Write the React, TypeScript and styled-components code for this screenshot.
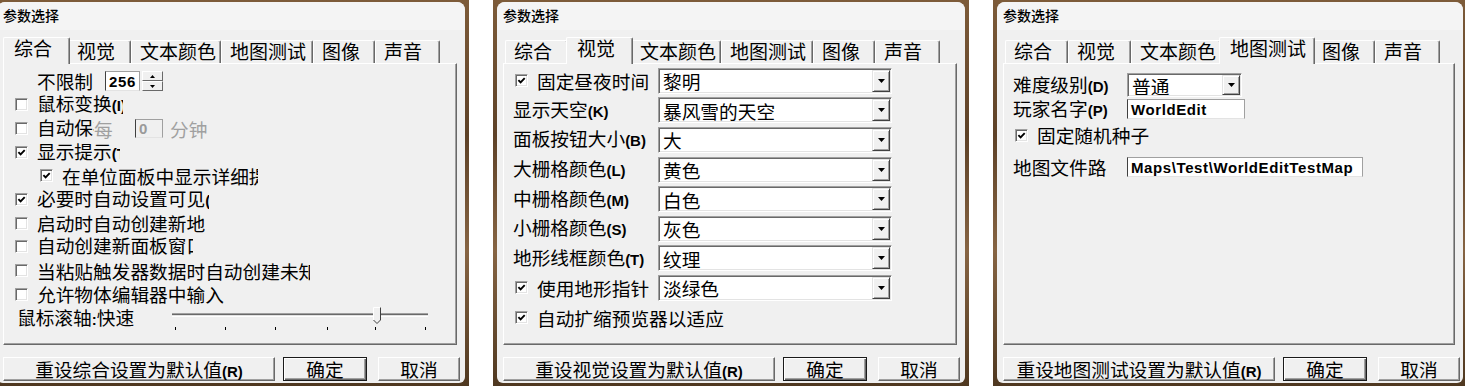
import React from "react";
import styled, { createGlobalStyle, css } from "styled-components";

const CJK = `"Noto Sans CJK SC", "Noto Sans", sans-serif`;
const LATIN = `"Liberation Sans", Arial, sans-serif`;

const GlobalStyle = createGlobalStyle`
  html, body {
    margin: 0;
    padding: 0;
    background: #ffffff;
  }
  body {
    font-family: ${CJK};
    color: #000000;
  }
`;

const TABS = [
  { label: "综合", w: 63 },
  { label: "视觉", w: 63 },
  { label: "文本颜色", w: 90 },
  { label: "地图测试", w: 92 },
  { label: "图像", w: 62 },
  { label: "声音", w: 65 },
];

const Screen = styled.div`
  display: flex;
  gap: 24px;
  width: 1465px;
  height: 386px;
  overflow: hidden;
`;

const Frame = styled.div<{ $left: number; $right: number }>`
  display: flex;
  flex: none;
  padding: 2px ${(p) => p.$right}px 3px ${(p) => p.$left}px;
  background: linear-gradient(180deg, #7d5b39 0%, #5d4127 35%, #866443 65%, #4f3820 100%);
  overflow: hidden;
`;

const Dialog = styled.div<{ $width: number; $shift: number }>`
  display: flex;
  flex-direction: column;
  flex: none;
  width: ${(p) => p.$width}px;
  height: 381px;
  margin-left: ${(p) => -p.$shift}px;
  background: #f0f0f0;
  border-radius: 8px 8px 6px 6px;
  overflow: hidden;
`;

const TitleBar = styled.div`
  height: 28px;
  box-sizing: border-box;
  padding: 5px 0 0 6px;
  font-size: 14px;
  line-height: 16px;
  font-weight: 500;
  background: #f4f4f4;
`;

const TabStrip = styled.div`
  display: flex;
  align-items: flex-end;
  height: 33px;
  padding-left: 8px;
  position: relative;
  z-index: 1;
`;

const Tab = styled.div<{ $w: number; $active?: boolean }>`
  box-sizing: border-box;
  flex: none;
  width: ${(p) => p.$w}px;
  height: 23px;
  padding-left: 8px;
  font-size: 19px;
  line-height: 19px;
  white-space: nowrap;
  border-top: 1px solid #ffffff;
  border-left: 1px solid #ffffff;
  border-right: 1px solid #696969;
  box-shadow: inset -1px 0 0 #a0a0a0;
  border-radius: 2px 2px 0 0;
  background: #f0f0f0;
  ${(p) =>
    p.$active &&
    css`
      position: relative;
      width: ${p.$w + 4}px;
      height: 27px;
      margin: 0 -2px -1px;
      padding-left: 10px;
    `}
`;

const Sheet = styled.div`
  box-sizing: border-box;
  height: 282px;
  margin: 0 8px 0 6px;
  border-style: solid;
  border-width: 1px;
  border-color: #ffffff #696969 #696969 #ffffff;
  box-shadow: inset -1px -1px 0 #a0a0a0;
  background: #f0f0f0;
`;

const ButtonRow = styled.div`
  display: flex;
  margin-top: 12px;
  padding-left: 6px;
`;

const PushButton = styled.div<{ $w: number; $ml?: number; $default?: boolean }>`
  box-sizing: border-box;
  flex: none;
  width: ${(p) => p.$w}px;
  height: 24px;
  margin-left: ${(p) => p.$ml ?? 0}px;
  font-size: 18.7px;
  line-height: 21px;
  text-align: center;
  white-space: nowrap;
  background: #f0f0f0;
  border: 1px solid;
  border-color: #ffffff #696969 #696969 #ffffff;
  box-shadow: inset -1px -1px 0 #a0a0a0;
  ${(p) =>
    p.$default &&
    css`
      border-color: #1a1a1a;
      box-shadow: inset 1px 1px 0 #ffffff, inset -1px -1px 0 #696969, inset -2px -2px 0 #a0a0a0;
    `}
`;

const List = styled.div<{ $top: number }>`
  display: flex;
  flex-direction: column;
  padding-top: ${(p) => p.$top}px;
`;

const Row = styled.div<{ $h: number; $pad: number }>`
  display: flex;
  align-items: center;
  height: ${(p) => p.$h}px;
  padding-left: ${(p) => p.$pad}px;
  font-size: 18.7px;
`;

const Text = styled.span<{ $w?: number; $ml?: number; $dim?: boolean }>`
  flex: none;
  display: inline-block;
  overflow: hidden;
  white-space: nowrap;
  line-height: 22px;
  margin-left: ${(p) => p.$ml ?? 0}px;
  color: ${(p) => (p.$dim ? "#a0a0a0" : "#000000")};
  ${(p) =>
    p.$w !== undefined &&
    css`
      width: ${p.$w}px;
    `}
`;

const Hot = styled.span`
  font-family: ${LATIN};
  font-weight: 700;
  font-size: 15px;
`;

const Box = styled.span`
  box-sizing: border-box;
  flex: none;
  display: inline-flex;
  align-items: center;
  justify-content: center;
  width: 13px;
  height: 13px;
  background: #ffffff;
  border: 1px solid;
  border-color: #a0a0a0 #ffffff #ffffff #a0a0a0;
  box-shadow: inset 1px 1px 0 #696969, inset -1px -1px 0 #e3e3e3;
`;

const Field = styled.span<{ $w: number; $h: number; $ml?: number; $dim?: boolean }>`
  box-sizing: border-box;
  flex: none;
  display: inline-flex;
  align-items: center;
  width: ${(p) => p.$w}px;
  height: ${(p) => p.$h}px;
  margin-left: ${(p) => p.$ml ?? 0}px;
  padding-left: 3px;
  overflow: hidden;
  white-space: nowrap;
  background: ${(p) => (p.$dim ? "#f0f0f0" : "#ffffff")};
  border: 1px solid;
  border-color: #a0a0a0 #a0a0a0 #e3e3e3 #404040;
  font-family: ${LATIN};
  font-weight: 700;
  font-size: 15px;
  letter-spacing: 0.6px;
  color: ${(p) => (p.$dim ? "#9a9a9a" : "#000000")};
`;

const Spin = styled.span`
  flex: none;
  display: inline-flex;
  flex-direction: column;
  width: 21px;
  height: 20px;
  margin-left: 2px;
`;

const SpinHalf = styled.span`
  box-sizing: border-box;
  flex: 1;
  display: flex;
  align-items: center;
  justify-content: center;
  background: #f0f0f0;
  border: 1px solid;
  border-color: #ffffff #696969 #696969 #ffffff;
`;

const SelectBox = styled.span<{ $w: number; $h: number }>`
  box-sizing: border-box;
  flex: none;
  display: inline-flex;
  align-items: stretch;
  width: ${(p) => p.$w}px;
  height: ${(p) => p.$h}px;
  padding: 1px;
  background: #ffffff;
  border: 1px solid;
  border-color: #a0a0a0 #ffffff #ffffff #a0a0a0;
  box-shadow: inset 1px 1px 0 #696969, inset -1px -1px 0 #e3e3e3;
`;

const SelectValue = styled.span`
  flex: 1;
  display: flex;
  align-items: center;
  padding-left: 3px;
  overflow: hidden;
  white-space: nowrap;
  font-size: 18.7px;
`;

const DropButton = styled.span`
  box-sizing: border-box;
  flex: none;
  width: 18px;
  display: flex;
  align-items: center;
  justify-content: center;
  background: #f0f0f0;
  border: 1px solid;
  border-color: #e3e3e3 #404040 #404040 #e3e3e3;
  box-shadow: inset 1px 1px 0 #ffffff, inset -1px -1px 0 #a0a0a0;
`;

const TrackSvg = styled.svg<{ $ml: number }>`
  flex: none;
  margin-left: ${(p) => p.$ml}px;
`;

function CheckBox({ checked }: { checked?: boolean }) {
  return (
    <Box>
      {checked && (
        <svg width="9" height="9" viewBox="0 0 9 9">
          <path d="M1.4 4.2 L3.6 6.4 L7.7 2.1" fill="none" stroke="#000" strokeWidth="1.9" />
        </svg>
      )}
    </Box>
  );
}

function Select({ w, h, value }: { w: number; h: number; value: string }) {
  return (
    <SelectBox $w={w} $h={h}>
      <SelectValue>{value}</SelectValue>
      <DropButton>
        <svg width="7" height="4" viewBox="0 0 7 4">
          <path d="M0 0h7L3.5 4z" fill="#000" />
        </svg>
      </DropButton>
    </SelectBox>
  );
}

function Trackbar() {
  const ticks = [5, 55, 105, 157, 205, 255];
  return (
    <TrackSvg $ml={33} width="262" height="24" viewBox="0 0 262 24">
      <rect x="2" y="7" width="256" height="1" fill="#a0a0a0" />
      <rect x="2" y="8" width="256" height="1" fill="#696969" />
      <rect x="2" y="9" width="256" height="1" fill="#e3e3e3" />
      <rect x="2" y="10" width="256" height="1" fill="#ffffff" />
      {ticks.map((t) => (
        <rect key={t} x={t} y="21" width="1" height="3" fill="#000" />
      ))}
      <polygon points="203,1 211,1 211,14 207,18 203,14" fill="#f0f0f0" />
      <polyline points="203.5,14 203.5,1.5 210.5,1.5" fill="none" stroke="#ffffff" strokeWidth="1" />
      <polyline points="210.5,1.5 210.5,14 207,17.5 203.5,14" fill="none" stroke="#404040" strokeWidth="1" />
    </TrackSvg>
  );
}

type WindowProps = {
  active: number;
  left: number;
  right: number;
  shift: number;
  width: number;
  reset: string;
  children: React.ReactNode;
};

function Window({ active, left, right, shift, width, reset, children }: WindowProps) {
  return (
    <Frame $left={left} $right={right}>
      <Dialog $width={width} $shift={shift}>
        <TitleBar>参数选择</TitleBar>
        <TabStrip>
          {TABS.map((t, i) => (
            <Tab key={t.label} $w={t.w} $active={i === active}>
              {t.label}
            </Tab>
          ))}
        </TabStrip>
        <Sheet>{children}</Sheet>
        <ButtonRow>
          <PushButton $w={272}>
            {reset}
            <Hot>(R)</Hot>
          </PushButton>
          <PushButton $w={84} $ml={8} $default>
            确定
          </PushButton>
          <PushButton $w={82} $ml={11}>
            取消
          </PushButton>
        </ButtonRow>
      </Dialog>
    </Frame>
  );
}

type CheckRowProps = { checked?: boolean; pad?: number; w?: number; h?: number; children: React.ReactNode };

function CheckRow({ checked, pad = 11, w, h = 23.7, children }: CheckRowProps) {
  return (
    <Row $h={h} $pad={pad}>
      <CheckBox checked={checked} />
      <Text $ml={9} $w={w}>
        {children}
      </Text>
    </Row>
  );
}

function GeneralPage() {
  return (
    <List $top={5}>
      <Row $h={24} $pad={33}>
        <Text $w={57}>不限制</Text>
        <Field $w={35} $h={20} $ml={11}>
          256
        </Field>
        <Spin>
          <SpinHalf>
            <svg width="5" height="3" viewBox="0 0 5 3">
              <path d="M0 3h5L2.5 0z" fill="#000" />
            </svg>
          </SpinHalf>
          <SpinHalf>
            <svg width="5" height="3" viewBox="0 0 5 3">
              <path d="M0 0h5L2.5 3z" fill="#000" />
            </svg>
          </SpinHalf>
        </Spin>
      </Row>
      <CheckRow w={86}>
        鼠标变换<Hot>(I)</Hot>
      </CheckRow>
      <Row $h={23.7} $pad={11}>
        <CheckBox />
        <Text $ml={9} $w={57}>
          自动保存<Hot>(A)</Hot>
        </Text>
        <Text $dim $w={41}>
          每
        </Text>
        <Field $w={28} $h={19} $dim>
          0
        </Field>
        <Text $dim $ml={7}>
          分钟
        </Text>
      </Row>
      <CheckRow checked w={83}>
        显示提示<Hot>(T)</Hot>
      </CheckRow>
      <CheckRow checked pad={36} w={196}>
        在单位面板中显示详细提示
      </CheckRow>
      <CheckRow checked w={172}>
        必要时自动设置可见<Hot>(V)</Hot>
      </CheckRow>
      <CheckRow w={169}>启动时自动创建新地图</CheckRow>
      <CheckRow w={156}>
        自动创建新面板窗口<Hot>(W)</Hot>
      </CheckRow>
      <CheckRow w={273}>当粘贴触发器数据时自动创建未知变量</CheckRow>
      <CheckRow>允许物体编辑器中输入</CheckRow>
      <Row $h={24} $pad={13}>
        <Text $w={120}>
          鼠标滚轴<Hot>:</Hot>快速
        </Text>
        <Trackbar />
      </Row>
    </List>
  );
}

const VISUAL = [
  { check: true, label: "固定昼夜时间", value: "黎明" },
  { label: "显示天空", hot: "(K)", value: "暴风雪的天空" },
  { label: "面板按钮大小", hot: "(B)", value: "大" },
  { label: "大栅格颜色", hot: "(L)", value: "黄色" },
  { label: "中栅格颜色", hot: "(M)", value: "白色" },
  { label: "小栅格颜色", hot: "(S)", value: "灰色" },
  { label: "地形线框颜色", hot: "(T)", value: "纹理" },
  { check: true, label: "使用地形指针", value: "淡绿色" },
  { check: true, label: "自动扩缩预览器以适应" },
];

function VisualPage() {
  return (
    <List $top={2}>
      {VISUAL.map((r) =>
        r.check ? (
          <Row key={r.label} $h={29.6} $pad={11}>
            <CheckBox checked />
            <Text $ml={9} $w={r.value ? 121 : undefined}>
              {r.label}
            </Text>
            {r.value && <Select w={234} h={26} value={r.value} />}
          </Row>
        ) : (
          <Row key={r.label} $h={29.6} $pad={9}>
            <Text $w={145}>
              {r.label}
              <Hot>{r.hot}</Hot>
            </Text>
            <Select w={234} h={26} value={r.value!} />
          </Row>
        )
      )}
    </List>
  );
}

function TestMapPage() {
  return (
    <List $top={9}>
      <Row $h={24} $pad={9}>
        <Text $w={114}>
          难度级别<Hot>(D)</Hot>
        </Text>
        <Select w={115} h={24} value="普通" />
      </Row>
      <Row $h={24} $pad={9}>
        <Text $w={114}>
          玩家名字<Hot>(P)</Hot>
        </Text>
        <Field $w={118} $h={20}>
          WorldEdit
        </Field>
      </Row>
      <CheckRow checked h={28}>
        固定随机种子
      </CheckRow>
      <Row $h={36} $pad={9}>
        <Text $w={94}>地图文件路径</Text>
        <Field $w={236} $h={20} $ml={20}>
          Maps\Test\WorldEditTestMap
        </Field>
      </Row>
    </List>
  );
}

export default function App() {
  return (
    <>
      <GlobalStyle />
      <Screen>
        <Window active={0} left={0} right={4} shift={3} width={468} reset="重设综合设置为默认值">
          <GeneralPage />
        </Window>
        <Window active={1} left={4} right={4} shift={0} width={468} reset="重设视觉设置为默认值">
          <VisualPage />
        </Window>
        <Window active={3} left={4} right={2} shift={0} width={466} reset="重设地图测试设置为默认值">
          <TestMapPage />
        </Window>
      </Screen>
    </>
  );
}
